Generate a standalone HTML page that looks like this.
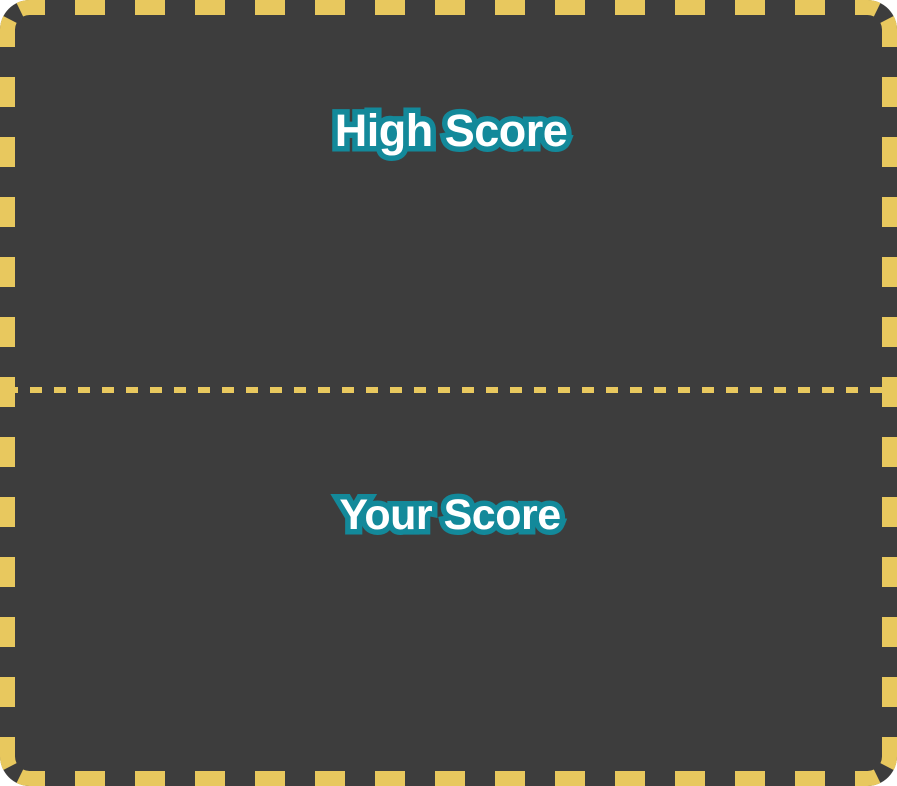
<!DOCTYPE html>
<html><head><style>
html,body{margin:0;padding:0;background:#fff;}
svg{display:block;}
</style></head><body>
<svg width="897" height="786" viewBox="0 0 897 786" xmlns="http://www.w3.org/2000/svg">
<rect x="0" y="0" width="897" height="786" rx="30" fill="#3d3d3d"/>
<g stroke="#e8c85e" stroke-width="15" fill="none">
<line x1="29.5" y1="7.5" x2="867.5" y2="7.5" stroke-dasharray="30 30" stroke-dashoffset="14.5"/>
<line x1="29.5" y1="778.5" x2="867.5" y2="778.5" stroke-dasharray="30 30" stroke-dashoffset="14.5"/>
<line x1="7.5" y1="29.5" x2="7.5" y2="756.5" stroke-dasharray="30 30" stroke-dashoffset="12.5"/>
<line x1="889.5" y1="29.5" x2="889.5" y2="756.5" stroke-dasharray="30 30" stroke-dashoffset="12.5"/>
<path d="M29.5 7.5 A22 22 0 0 0 7.5 29.5" stroke-dasharray="10 14 11"/>
<path d="M867.5 7.5 A22 22 0 0 1 889.5 29.5" stroke-dasharray="10 14 11"/>
<path d="M29.5 778.5 A22 22 0 0 1 7.5 756.5" stroke-dasharray="10 14 11"/>
<path d="M867.5 778.5 A22 22 0 0 0 889.5 756.5" stroke-dasharray="10 14 11"/>
<line x1="15" y1="390" x2="882" y2="390" stroke-width="6" stroke-dasharray="12 12" stroke-dashoffset="9"/>
</g>
<g font-family="Liberation Sans, sans-serif" font-weight="bold" text-anchor="middle" fill="#fff" stroke="#13899a" stroke-width="11" stroke-linejoin="miter" paint-order="stroke" letter-spacing="-0.5">
<text x="451" y="146" font-size="45">High Score</text>
<text x="450" y="529" font-size="43">Your Score</text>
</g>
</svg>
</body></html>
